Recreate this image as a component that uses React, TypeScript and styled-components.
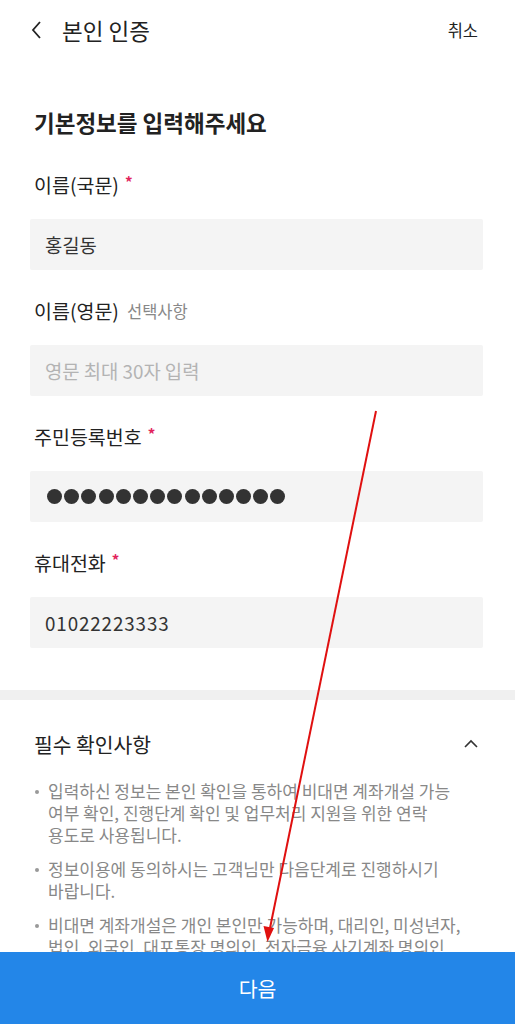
import React from 'react';
import styled, { createGlobalStyle } from 'styled-components';

const GlobalStyle = createGlobalStyle`
  html, body {
    margin: 0;
    padding: 0;
    background: #fff;
  }
  body {
    font-family: "Noto Sans CJK KR", "Noto Sans", sans-serif;
    color: #222;
  }
  * { box-sizing: border-box; }
`;

const Page = styled.div`
  position: relative;
  width: 515px;
  height: 1024px;
  display: flex;
  flex-direction: column;
  overflow: hidden;
  background: #fff;
`;

const Header = styled.div`
  height: 60px;
  flex-shrink: 0;
  display: flex;
  align-items: center;
  padding: 0 37px 0 30px;
`;

const BackButton = styled.button`
  width: 16px;
  height: 24px;
  padding: 0;
  border: 0;
  background: none;
  display: flex;
  align-items: center;
`;

const Title = styled.h1`
  margin: 0 0 0 16px;
  font-size: 22.5px;
  font-weight: 400;
  color: #222;
  flex: 1;
`;

const Cancel = styled.span`
  font-size: 16.5px;
  color: #222;
`;

const Content = styled.div`
  flex: 1;
  overflow: hidden;
`;

const FormSection = styled.section`
  padding: 47px 32px 42px 30px;
`;

const Heading = styled.h2`
  margin: 0 0 35px 4px;
  font-size: 22.5px;
  line-height: 30px;
  font-weight: 700;
  color: #222;
`;

const Field = styled.div`
  & + & {
    margin-top: 28px;
  }
`;

const Label = styled.div`
  margin: 0 0 21px 4px;
  font-size: 19.5px;
  line-height: 26px;
  color: #222;
  display: flex;
  align-items: center;
`;

const Required = styled.span`
  color: #e2245c;
  font-size: 15px;
  font-weight: 700;
  margin-left: 6px;
  align-self: flex-start;
  line-height: 20px;
`;

const Optional = styled.span`
  color: #888;
  font-size: 16.5px;
  margin-left: 8px;
`;

const InputBox = styled.div<{ $placeholder?: boolean; $numeric?: boolean }>`
  height: 51px;
  background: #f4f4f4;
  border-radius: 2px;
  padding: 0 15px;
  display: flex;
  align-items: center;
  font-size: 18.8px;
  letter-spacing: ${(p) => (p.$numeric ? '0.9px' : '0')};
  color: ${(p) => (p.$placeholder ? '#b3b3b3' : '#333')};
`;

const Dots = styled.div`
  display: flex;
  gap: 2.2px;
  padding-left: 2px;
`;

const Dot = styled.span`
  width: 15px;
  height: 15px;
  border-radius: 50%;
  background: #333;
`;

const Divider = styled.div`
  height: 10px;
  background: #f0f0f0;
`;

const NoticeSection = styled.section`
  padding: 30px 36px 0 34px;
`;

const NoticeHeader = styled.div`
  display: flex;
  align-items: center;
  justify-content: space-between;
  margin-bottom: 22px;
`;

const NoticeTitle = styled.h3`
  margin: 0;
  font-size: 20.4px;
  line-height: 28px;
  font-weight: 400;
  color: #222;
`;

const NoticeList = styled.ul`
  margin: 0;
  padding: 0;
  list-style: none;
`;

const NoticeItem = styled.li`
  position: relative;
  padding-left: 14px;
  font-size: 17px;
  line-height: 22px;
  color: #888;
  white-space: nowrap;

  &::before {
    content: '';
    position: absolute;
    left: 1px;
    top: 10px;
    width: 4px;
    height: 4px;
    border-radius: 50%;
    background: #999;
  }

  & + & {
    margin-top: 12px;
  }
`;

const NextButton = styled.button`
  flex-shrink: 0;
  height: 72px;
  width: 100%;
  border: 0;
  background: #2386e8;
  color: #fff;
  font-family: inherit;
  font-size: 20.5px;
  padding: 0;
`;

const Annotation = styled.svg`
  position: absolute;
  left: 0;
  top: 0;
  pointer-events: none;
`;

const fields = [
  { label: '이름(국문)', required: true, value: '홍길동' },
  { label: '이름(영문)', optional: '선택사항', placeholder: '영문 최대 30자 입력' },
  { label: '주민등록번호', required: true, masked: 14 },
  { label: '휴대전화', required: true, value: '01022223333', numeric: true },
];

const notices = [
  [
    '입력하신 정보는 본인 확인을 통하여 비대면 계좌개설 가능',
    '여부 확인, 진행단계 확인 및 업무처리 지원을 위한 연락',
    '용도로 사용됩니다.',
  ],
  ['정보이용에 동의하시는 고객님만 다음단계로 진행하시기', '바랍니다.'],
  [
    '비대면 계좌개설은 개인 본인만 가능하며, 대리인, 미성년자,',
    '법인, 외국인, 대포통장 명의인, 전자금융 사기계좌 명의인',
    '등은 개설이 불가합니다.',
  ],
];

const App: React.FC = () => {
  return (
    <>
      <GlobalStyle />
      <Page>
        <Header>
          <BackButton aria-label="뒤로">
            <svg width="12" height="20" viewBox="0 0 12 20">
              <polyline points="10,2 3,10 10,18" fill="none" stroke="#222" strokeWidth="1.8" />
            </svg>
          </BackButton>
          <Title>본인 인증</Title>
          <Cancel>취소</Cancel>
        </Header>

        <Content>
          <FormSection>
            <Heading>기본정보를 입력해주세요</Heading>
            {fields.map((f) => (
              <Field key={f.label}>
                <Label>
                  {f.label}
                  {f.required && <Required>*</Required>}
                  {f.optional && <Optional>{f.optional}</Optional>}
                </Label>
                {f.masked ? (
                  <InputBox>
                    <Dots>
                      {Array.from({ length: f.masked }).map((_, i) => (
                        <Dot key={i} />
                      ))}
                    </Dots>
                  </InputBox>
                ) : f.placeholder ? (
                  <InputBox $placeholder>{f.placeholder}</InputBox>
                ) : (
                  <InputBox $numeric={f.numeric}>{f.value}</InputBox>
                )}
              </Field>
            ))}
          </FormSection>

          <Divider />

          <NoticeSection>
            <NoticeHeader>
              <NoticeTitle>필수 확인사항</NoticeTitle>
              <svg width="16" height="10" viewBox="0 0 16 10">
                <polyline points="2,8 8,2 14,8" fill="none" stroke="#333" strokeWidth="1.6" />
              </svg>
            </NoticeHeader>
            <NoticeList>
              {notices.map((lines, i) => (
                <NoticeItem key={i}>
                  {lines.map((line, j) => (
                    <React.Fragment key={j}>
                      {j > 0 && <br />}
                      {line}
                    </React.Fragment>
                  ))}
                </NoticeItem>
              ))}
            </NoticeList>
          </NoticeSection>
        </Content>

        <NextButton>다음</NextButton>

        <Annotation width="515" height="1024" viewBox="0 0 515 1024">
          <line x1="376" y1="411" x2="270" y2="928" stroke="#e01010" strokeWidth="2" />
          <polygon points="267.5,942 263.5,926 274,928" fill="#e01010" />
        </Annotation>
      </Page>
    </>
  );
};

export default App;
